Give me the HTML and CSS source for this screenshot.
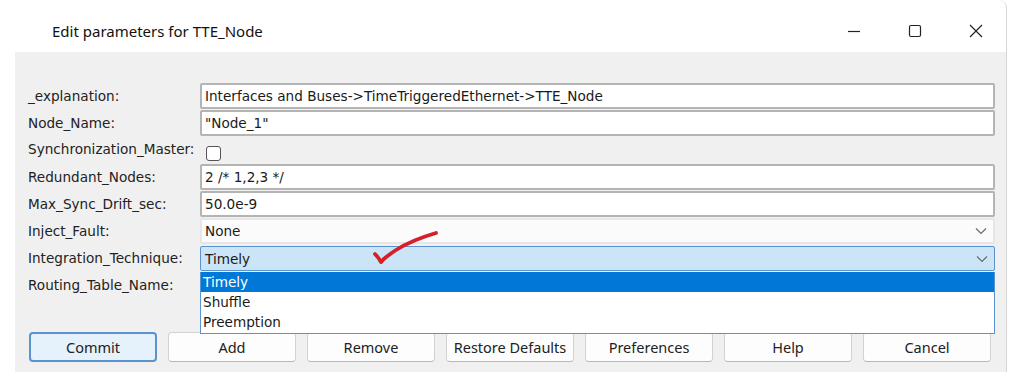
FILE: index.html
```html
<!DOCTYPE html>
<html lang="en">

<head>
    <meta charset="UTF-8">
    <title>Edit parameters for TTE_Node</title>
    <link rel="stylesheet" href="styles.css">
</head>

<body>
    <div class="window">
        <div class="titlebar">
            <span class="title">Edit parameters for TTE_Node</span>
            <div class="controls">
                <span class="ctrl">
                    <svg width="16" height="16" viewBox="0 0 16 16"><path d="M2 8.5h12" stroke="#222" stroke-width="1.2"/></svg>
                </span>
                <span class="ctrl">
                    <svg width="16" height="16" viewBox="0 0 16 16"><rect x="2.5" y="2.5" width="11" height="11" rx="1.5" fill="none" stroke="#222" stroke-width="1.2"/></svg>
                </span>
                <span class="ctrl">
                    <svg width="16" height="16" viewBox="0 0 16 16"><path d="M2 2l12 12M14 2L2 14" stroke="#222" stroke-width="1.2"/></svg>
                </span>
            </div>
        </div>

        <div class="dialog">
            <div class="params">
                <label>_explanation:</label>
                <div class="field">Interfaces and Buses-&gt;TimeTriggeredEthernet-&gt;TTE_Node</div>

                <label>Node_Name:</label>
                <div class="field">"Node_1"</div>

                <label class="sync">Synchronization_Master:</label>
                <div class="check-cell"><span class="checkbox"></span></div>

                <label>Redundant_Nodes:</label>
                <div class="field">2 /* 1,2,3 */</div>

                <label>Max_Sync_Drift_sec:</label>
                <div class="field">50.0e-9</div>

                <label>Inject_Fault:</label>
                <div class="field combo">
                    <span>None</span>
                    <svg class="chevron" width="12" height="8" viewBox="0 0 12 8"><path d="M1 1.5l5 5 5-5" fill="none" stroke="#6b6b6b" stroke-width="1.2"/></svg>
                </div>

                <label>Integration_Technique:</label>
                <div class="combo-wrap">
                    <div class="field combo open">
                        <span>Timely</span>
                        <svg class="chevron" width="12" height="8" viewBox="0 0 12 8"><path d="M1 1.5l5 5 5-5" fill="none" stroke="#6b6b6b" stroke-width="1.2"/></svg>
                    </div>
                    <ul class="dropdown">
                        <li class="selected">Timely</li>
                        <li>Shuffle</li>
                        <li>Preemption</li>
                    </ul>
                    <svg class="tick" width="70" height="40" viewBox="0 0 70 40">
                        <path d="M3 24 Q6 27 9 32 Q12 28 24 20 Q40 10 64 3" fill="none" stroke="#d3202a" stroke-width="3.8" stroke-linecap="round" stroke-linejoin="round"/>
                    </svg>
                </div>

                <label>Routing_Table_Name:</label>
                <div class="field blank"></div>
            </div>

            <div class="buttons">
                <button class="default">Commit</button>
                <button>Add</button>
                <button>Remove</button>
                <button>Restore Defaults</button>
                <button>Preferences</button>
                <button>Help</button>
                <button>Cancel</button>
            </div>
        </div>
    </div>
</body>

</html>
```

FILE: styles.css
```css
body {
    margin: 0;
    padding: 0;
    background: #fff;
    font-family: 'DejaVu Sans', Verdana, sans-serif;
    color: #1a1a1a;
}

.window {
    width: 1007px;
    height: 372px;
    border-right: 1px solid #d6d6d6;
    border-top-right-radius: 8px;
    box-sizing: border-box;
}

.titlebar {
    height: 52px;
    display: flex;
    align-items: center;
    justify-content: space-between;
    padding-left: 52px;
    padding-top: 10px;
    box-sizing: border-box;
}

.title {
    font-family: 'Noto Sans', sans-serif;
    font-size: 15px;
    color: #111;
}

.controls {
    display: flex;
    align-items: center;
}

.ctrl {
    width: 61px;
    height: 30px;
    display: flex;
    align-items: center;
    justify-content: center;
}

.dialog {
    margin-left: 15px;
    height: 320px;
    background: #f0f0f0;
    padding: 31px 11px 0 13px;
    box-sizing: border-box;
}

.params {
    display: grid;
    grid-template-columns: 172px 1fr;
    grid-auto-rows: 26px;
    row-gap: 1px;
    font-size: 13.6px;
}

.params label {
    display: flex;
    align-items: center;
    color: #222;
}

.params label.sync {
    padding-bottom: 3px;
}

.field {
    background: #fff;
    border: 2px solid #b4b4b4;
    border-radius: 2px;
    display: flex;
    align-items: center;
    padding-left: 3px;
    box-sizing: border-box;
}

.check-cell {
    display: flex;
    align-items: center;
    padding-left: 6px;
}

.checkbox {
    width: 13px;
    height: 13px;
    margin-top: 6px;
    border: 1px solid #555;
    border-radius: 3px;
    background: #fff;
}

.combo {
    justify-content: space-between;
    padding-right: 6px;
    background: #fbfbfb;
    border-color: #e6e6e6;
}

.combo.open {
    height: 100%;
    background: #cce4f7;
    border: 1px solid #5a93cf;
    padding-left: 4px;
}

.combo-wrap {
    position: relative;
    margin-top: 1px;
}

.dropdown {
    position: absolute;
    left: 0;
    right: 0;
    top: 26px;
    margin: 0;
    padding: 0 0 1px;
    list-style: none;
    background: #fff;
    border: 1px solid #5a93cf;
    border-top: none;
    z-index: 10;
}

.dropdown li {
    height: 20px;
    line-height: 20px;
    padding-left: 2px;
}

.dropdown li.selected {
    background: #0078d7;
    color: #fff;
}

.tick {
    position: absolute;
    left: 172px;
    top: -16px;
    z-index: 20;
}

.blank {
    visibility: hidden;
}

.buttons {
    display: flex;
    gap: 11px;
    margin-top: 34px;
    padding-left: 1px;
}

.buttons button {
    width: 128px;
    height: 30px;
    font-family: 'Noto Sans', sans-serif;
    font-size: 14.5px;
    color: #222;
    background: #fdfdfd;
    border: 1px solid #d2d2d2;
    border-bottom-color: #b8b8b8;
    border-radius: 4px;
}

.buttons button.default {
    background: #e5f1fb;
    border: 2px solid #5a93cf;
}
```
